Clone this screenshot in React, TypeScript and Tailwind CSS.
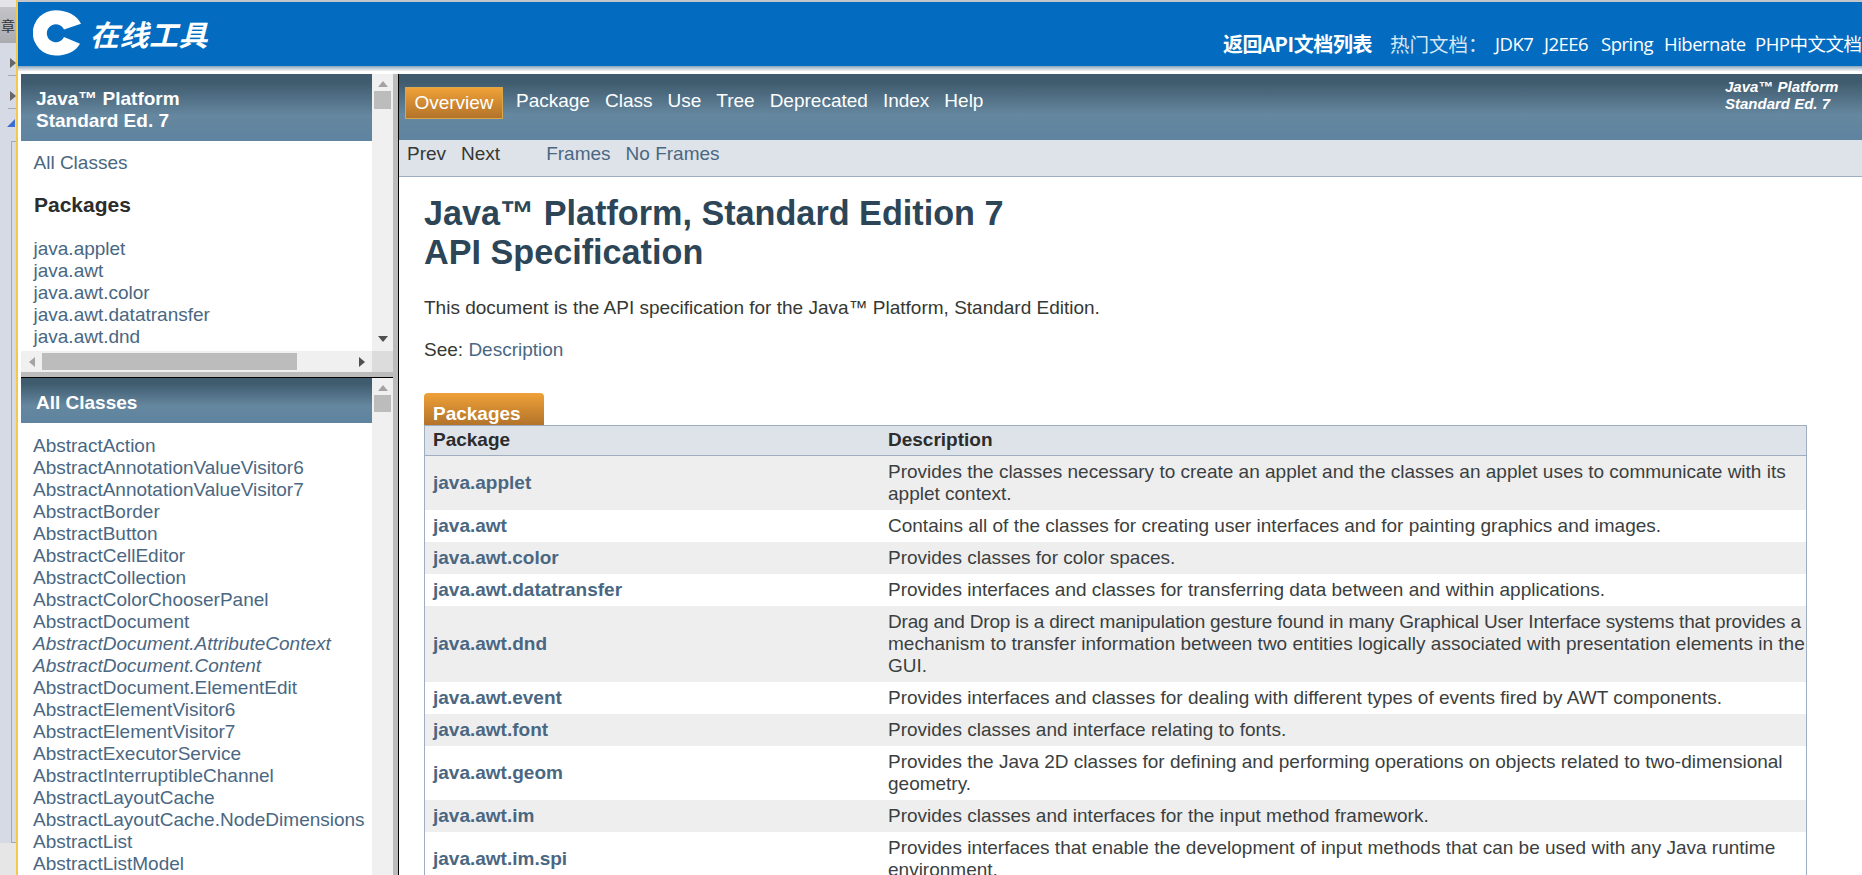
import React from "react";

const sans = "font-['Liberation_Sans',Arial,sans-serif]";

const packages = ["java.applet", "java.awt", "java.awt.color", "java.awt.datatransfer", "java.awt.dnd", "java.awt.event"];

const classes: [string, boolean?][] = [
  ["AbstractAction"],
  ["AbstractAnnotationValueVisitor6"],
  ["AbstractAnnotationValueVisitor7"],
  ["AbstractBorder"],
  ["AbstractButton"],
  ["AbstractCellEditor"],
  ["AbstractCollection"],
  ["AbstractColorChooserPanel"],
  ["AbstractDocument"],
  ["AbstractDocument.AttributeContext", true],
  ["AbstractDocument.Content", true],
  ["AbstractDocument.ElementEdit"],
  ["AbstractElementVisitor6"],
  ["AbstractElementVisitor7"],
  ["AbstractExecutorService"],
  ["AbstractInterruptibleChannel"],
  ["AbstractLayoutCache"],
  ["AbstractLayoutCache.NodeDimensions"],
  ["AbstractList"],
  ["AbstractListModel"],
];

const rows: [string, React.ReactNode][] = [
  ["java.applet", "Provides the classes necessary to create an applet and the classes an applet uses to communicate with its applet context."],
  ["java.awt", "Contains all of the classes for creating user interfaces and for painting graphics and images."],
  ["java.awt.color", "Provides classes for color spaces."],
  ["java.awt.datatransfer", "Provides interfaces and classes for transferring data between and within applications."],
  [
    "java.awt.dnd",
    <>
      <span className="block whitespace-nowrap tracking-[-0.19px]">Drag and Drop is a direct manipulation gesture found in many Graphical User Interface systems that provides a</span>
      <span className="block whitespace-nowrap">mechanism to transfer information between two entities logically associated with presentation elements in the</span>
      <span className="block">GUI.</span>
    </>,
  ],
  ["java.awt.event", "Provides interfaces and classes for dealing with different types of events fired by AWT components."],
  ["java.awt.font", "Provides classes and interface relating to fonts."],
  ["java.awt.geom", "Provides the Java 2D classes for defining and performing operations on objects related to two-dimensional geometry."],
  ["java.awt.im", "Provides classes and interfaces for the input method framework."],
  ["java.awt.im.spi", "Provides interfaces that enable the development of input methods that can be used with any Java runtime environment."],
];

const barGradient = "bg-[linear-gradient(to_bottom,#3f5b6e_0%,#3f5b6e_12%,#65879f_62%,#5f84a0_100%)]";

function Tri({ dir, color, className }: { dir: "up" | "down" | "left" | "right"; color: string; className?: string }) {
  const pts = { up: "0,6 5,0 10,6", down: "0,0 10,0 5,6", left: "6,0 6,10 0,5", right: "0,0 0,10 6,5" }[dir];
  const w = dir === "up" || dir === "down" ? 10 : 6;
  const h = dir === "up" || dir === "down" ? 6 : 10;
  return (
    <svg width={w} height={h} viewBox={`0 0 ${w} ${h}`} className={className}>
      <polygon points={pts} fill={color} />
    </svg>
  );
}

function Strip() {
  return (
    <div className="w-[18px] shrink-0 h-full border-r-2 border-[#f2c94c] flex flex-col bg-[#d6dae4] overflow-hidden">
      <div className="h-[7px] bg-[#e4e4e6]" />
      <div className="h-[36px] bg-[linear-gradient(to_bottom,#c4c4c8,#aaabb0)] text-[14px] leading-[36px] text-[#333] font-['Noto_Sans_CJK_SC',sans-serif] pl-[1px] overflow-hidden whitespace-nowrap">
        章
      </div>
      <div className="flex-1 flex flex-col items-end relative">
        <Tri dir="right" color="#666" className="mt-[15px]" />
        <div className="mt-[7px] h-[1px] w-[8px] bg-[#aaa]" />
        <Tri dir="right" color="#666" className="mt-[15px]" />
        <div className="mt-[7px] h-[1px] w-[8px] bg-[#aaa]" />
        <svg width="8" height="8" viewBox="0 0 8 8" className="mt-[10px] mr-[1px]">
          <polygon points="0,8 8,0 8,8" fill="#3a6fd0" />
        </svg>
        <div className="mt-[14px] ml-[11px] self-stretch h-[702px] border-l border-t border-b border-[#a8a8ac]" />
        <div className="flex-1 self-stretch bg-[#e6e6e6]" />
      </div>
    </div>
  );
}

function Header() {
  return (
    <div className="shrink-0">
      <div className="h-[2px] bg-[#c3c7cc]" />
      <div className="h-[64px] bg-[#036cc0] flex items-start relative overflow-hidden whitespace-nowrap">
        <svg width="49" height="46" viewBox="0 0 49 46" className="ml-[15px] mt-[8px] shrink-0">
          <path d="M48 13.7 C44 5 34 0.2 22.5 0.2 A22.7 22.7 0 1 0 22.5 45.6 C34 45.6 43 41 47 33.7 L31 27 A9 9 0 1 1 31 19.5 Z" fill="#fff" />
        </svg>
        <div className="ml-[8px] mt-[11px] text-[29px] leading-[40px] tracking-[0.5px] font-bold text-white italic font-['Noto_Sans_CJK_SC',sans-serif]">在线工具</div>
        <div className="absolute left-[1205px] top-[27px] flex items-center h-[30px] text-white">
          <span className="w-[167px] text-[20px] font-bold font-['Noto_Sans_CJK_SC',sans-serif] tracking-[-0.4px]">返回API文档列表</span>
          <span className="w-[105px] text-[19.5px] text-[#d6e6f3] font-['Noto_Sans_CJK_SC',sans-serif]">热门文档：</span>
          <span className="w-[49px] text-[18.5px] tracking-[-0.5px] font-['Open_Sans',sans-serif]">JDK7</span>
          <span className="w-[57px] text-[18.5px] tracking-[-0.5px] font-['Open_Sans',sans-serif]">J2EE6</span>
          <span className="w-[63px] text-[18.5px] tracking-[-0.5px] font-['Open_Sans',sans-serif]">Spring</span>
          <span className="w-[91px] text-[18.5px] tracking-[-0.5px] font-['Open_Sans',sans-serif]">Hibernate</span>
          <span className="text-[18.5px] tracking-[-0.5px] font-['Open_Sans','Noto_Sans_CJK_SC',sans-serif]">PHP中文文档</span>
        </div>
      </div>
      <div className="h-[5px] bg-[linear-gradient(to_bottom,#8aa5bb,#eef2f5)]" />
      <div className="h-[3px] bg-white" />
    </div>
  );
}

function LeftTop() {
  return (
    <div className="flex h-[277px] shrink-0">
      <div className="w-[351px] flex flex-col overflow-hidden">
        <div className={`h-[67px] shrink-0 ${barGradient} text-white font-bold text-[19px] leading-[22px] px-[15px] pt-[14px]`}>
          Java™ Platform
          <br />
          Standard Ed. 7
        </div>
        <div className="text-[19px] leading-[22px] text-[#4a6782] pl-[12.5px] pt-[11px]">All Classes</div>
        <div className="text-[21px] leading-[22px] font-bold text-[#2c2c2c] pl-[13px] pt-[20px]">Packages</div>
        <div className="text-[19px] leading-[22px] text-[#4a6782] pl-[12.5px] pt-[22px]">
          {packages.map((p) => (
            <div key={p}>{p}</div>
          ))}
        </div>
      </div>
      <div className="w-[21px] shrink-0 flex flex-col bg-[#f0f0f0] items-center h-[277px]">
        <div className="h-[17px] flex items-center justify-center pt-[2px]">
          <Tri dir="up" color="#a3a3a3" />
        </div>
        <div className="w-[17px] h-[18px] bg-[#bcbcbc]" />
        <div className="flex-1" />
        <div className="h-[17px] flex items-start justify-center pt-[2px]">
          <Tri dir="down" color="#505050" />
        </div>
      </div>
    </div>
  );
}

function HScroll() {
  return (
    <div className="h-[21px] shrink-0 flex bg-[#f0f0f0] items-center">
      <div className="w-[21px] flex justify-center">
        <Tri dir="left" color="#a3a3a3" />
      </div>
      <div className="w-[255px] h-[17px] bg-[#bcbcbc]" />
      <div className="w-[75px] flex justify-end pr-[7px]">
        <Tri dir="right" color="#505050" />
      </div>
      <div className="w-[21px] h-[21px] bg-[#dcdcdc]" />
    </div>
  );
}

function LeftBottom() {
  return (
    <div className="flex flex-1 min-h-0">
      <div className="w-[351px] flex flex-col overflow-hidden">
        <div className={`h-[45px] shrink-0 ${barGradient} text-white font-bold text-[19px] leading-[45px] pt-[2px] px-[15px]`}>All Classes</div>
        <div className="text-[19px] leading-[22px] text-[#4a6782] pl-[12px] pt-[12px] whitespace-nowrap">
          {classes.map(([c, it]) => (
            <div key={c} className={it ? "italic" : ""}>
              {c}
            </div>
          ))}
        </div>
      </div>
      <div className="w-[21px] shrink-0 bg-[#f0f0f0] flex flex-col items-center h-full">
        <div className="h-[17px] flex items-center justify-center pt-[2px]">
          <Tri dir="up" color="#a3a3a3" />
        </div>
        <div className="h-[17px] w-[17px] bg-[#bcbcbc]" />
      </div>
    </div>
  );
}

function NavBar() {
  return (
    <div className={`h-[66px] shrink-0 ${barGradient} flex relative text-white`}>
      <div className="ml-[6px] mt-[13px] h-[32px] w-[98px] border border-[#d9a84a] bg-[linear-gradient(to_bottom,#f0a138,#b2732a)] text-[19px] leading-[30px] text-center">Overview</div>
      <div className="ml-[13px] mt-[15px] flex gap-[15px] text-[19px] leading-[24px]">
        <span>Package</span>
        <span>Class</span>
        <span>Use</span>
        <span>Tree</span>
        <span>Deprecated</span>
        <span>Index</span>
        <span>Help</span>
      </div>
      <div className="absolute left-[1326px] top-[4px] italic font-bold text-[15px] leading-[17px] whitespace-nowrap">
        Java™ Platform
        <br />
        Standard Ed. 7
      </div>
    </div>
  );
}

function SubNav() {
  return (
    <div className="h-[37px] shrink-0 bg-[#dee3e9] border-b border-[#9eadc0] text-[19px] leading-[24px] flex pt-[2px] pl-[8px]">
      <span className="text-[#353833]">Prev</span>
      <span className="ml-[15px] text-[#353833]">Next</span>
      <span className="ml-[46px] text-[#4a6782]">Frames</span>
      <span className="ml-[15px] text-[#4a6782]">No Frames</span>
    </div>
  );
}

function Table() {
  return (
    <div className="mr-[55px]">
      <div className="h-[32px] w-[120px] rounded-t-[4px] bg-[linear-gradient(to_bottom,#f0a138,#b2732a)] text-white font-bold text-[19px] leading-[22px] pl-[9px] pt-[10px]">Packages</div>
      <div className="border border-[#9eadc0] border-b-0">
        <div className="grid grid-cols-[455px_1fr] bg-[#dee3e9] border-b border-[#9eadc0] h-[30px] font-bold text-[#2c2c2c] text-[19px] leading-[28px]">
          <div className="pl-[8px]">Package</div>
          <div className="pl-[8px]">Description</div>
        </div>
        {rows.map(([p, d], i) => (
          <div key={p} className={`grid grid-cols-[455px_1fr] items-center py-[5px] ${i % 2 === 0 ? "bg-[#eeeeef]" : "bg-white"}`}>
            <div className="pl-[8px] font-bold text-[#4a6782]">{p}</div>
            <div className="px-[8px] text-[#3b3f3f]">{d}</div>
          </div>
        ))}
      </div>
    </div>
  );
}

export default function App() {
  return (
    <div className={`w-[1862px] h-[875px] overflow-hidden flex bg-white ${sans} text-[19px] leading-[22px]`}>
      <Strip />
      <div className="flex-1 min-w-0 flex flex-col">
        <Header />
        <div className="flex flex-1 min-h-0 overflow-hidden">
          <div className="w-[375px] shrink-0 pl-[3px] bg-white flex flex-col">
            <LeftTop />
            <HScroll />
            <div className="h-[5px] shrink-0 bg-[#bcbcbc] w-[372px]" />
            <div className="h-[1px] shrink-0 bg-black w-[372px]" />
            <LeftBottom />
          </div>
          <div className="w-[5px] shrink-0 bg-[#bcbcbc]" />
          <div className="flex-1 min-w-0 border-l border-black flex flex-col">
            <NavBar />
            <SubNav />
            <div className="pl-[25px] overflow-hidden">
              <h1 className="text-[34.2px] leading-[39px] font-bold text-[#2c4557] mt-[17px]">
                Java™ Platform, Standard Edition 7
                <br />
                API Specification
              </h1>
              <div className="mt-[25px] text-[#353833]">This document is the API specification for the Java™ Platform, Standard Edition.</div>
              <div className="mt-[20px] text-[#353833]">
                See: <span className="text-[#4a6782]">Description</span>
              </div>
              <div className="mt-[32px]">
                <Table />
              </div>
            </div>
          </div>
        </div>
      </div>
    </div>
  );
}
